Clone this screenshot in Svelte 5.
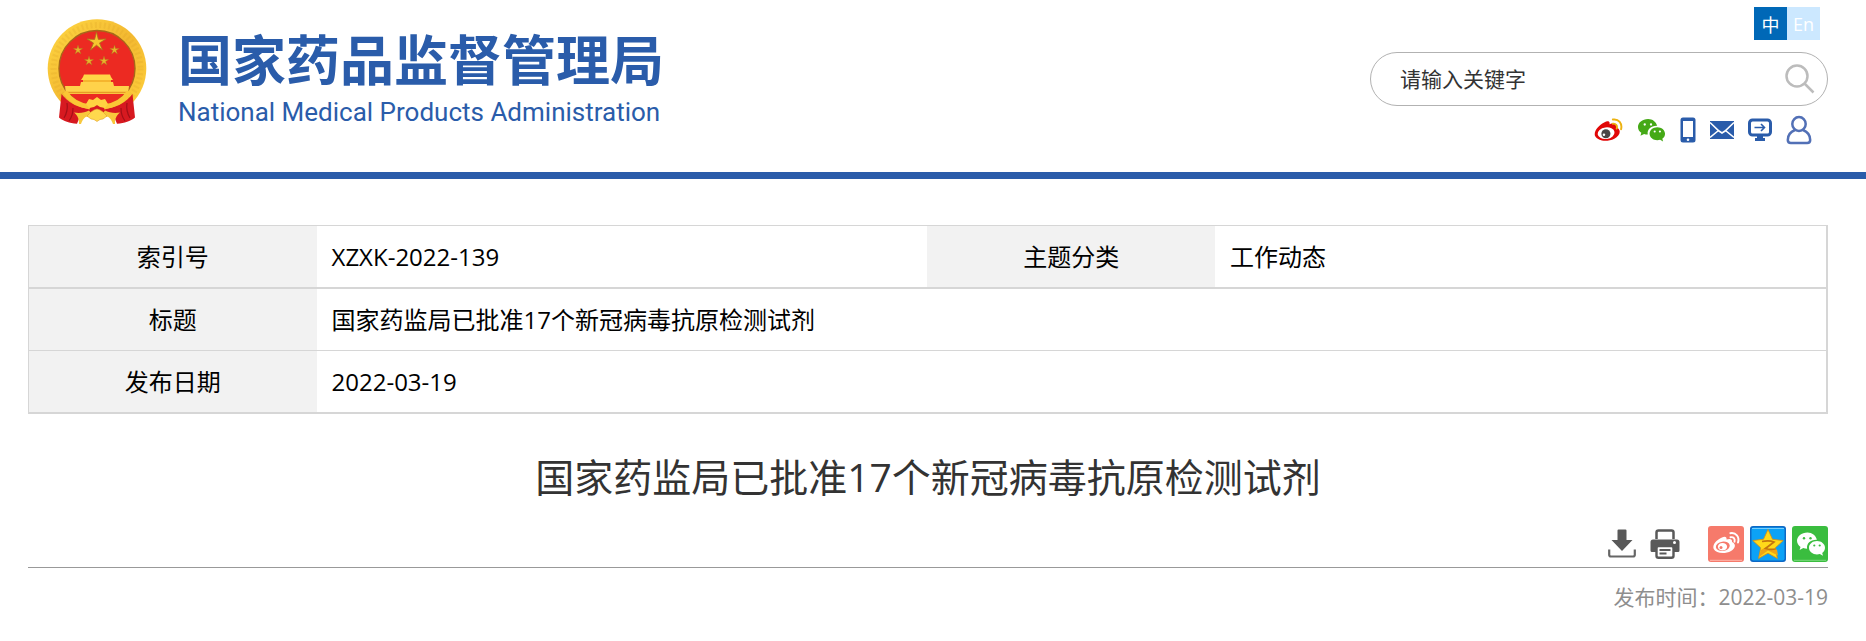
<script>
  let keyword = $state('');
  let lang = $state('zh');

  const title = '国家药监局已批准17个新冠病毒抗原检测试剂';
  const published = '2022-03-19';

  /** Points of a five-pointed star */
  function star(cx, cy, r, inner = 0.4) {
    const pts = [];
    for (let i = 0; i < 10; i++) {
      const rad = i % 2 ? r * inner : r;
      const a = (Math.PI / 5) * i - Math.PI / 2;
      pts.push(`${(cx + rad * Math.cos(a)).toFixed(2)},${(cy + rad * Math.sin(a)).toFixed(2)}`);
    }
    return pts.join(' ');
  }

  const smallStars = [[31, 31], [67.5, 31], [42, 42], [57, 42]];
</script>

{#snippet wechatShape(eyes)}
  <path d="M11.5 1C5.4 1 1 4.900 1 9.300c0 2.600 1.500 4.700 3.500 6.100L3.600 18.500l3.700-1.900c1.100.3 2.400.6 3.800.6-.9-5.500 3.700-9.300 9.800-9C19.800 3.900 16.100 1 11.500 1z" />
  <path d="M29 16.300c0-3.800-3.700-6.700-8-6.700s-8 2.900-8 6.700 3.700 6.700 8 6.700c1 0 2-.2 2.900-.4l3.100 1.700-.8-2.700c1.700-1.300 2.800-3.100 2.800-5.300z" />
  <g fill={eyes}>
    <circle cx="8" cy="6.800" r="1.200" />
    <circle cx="14.500" cy="6.800" r="1.200" />
    <circle cx="18.300" cy="14" r="1.100" />
    <circle cx="23.700" cy="14" r="1.100" />
  </g>
{/snippet}

<header class="site-header">
  <a class="brand" href="/" aria-label="国家药品监督管理局">
    <svg class="emblem" viewBox="0 0 100 105" aria-hidden="true">
      <defs>
        <linearGradient id="gold" x1="0" y1="0" x2="1" y2="1">
          <stop offset="0" stop-color="#ffd843" />
          <stop offset="0.5" stop-color="#f3b931" />
          <stop offset="1" stop-color="#ffd23c" />
        </linearGradient>
      </defs>
      <circle cx="50" cy="49.500" r="49.300" fill="url(#gold)" />
      <circle cx="50" cy="49.500" r="43.500" fill="none" stroke="#d99a22" stroke-width="6" stroke-dasharray="2 2.500" opacity="0.2" />
      <circle cx="50" cy="49.500" r="38" fill="#ec2a22" stroke="#a7661a" stroke-width="1.400" />
      <polygon points={star(49.5, 23, 10, 0.32)} fill="#f6c52f" stroke="#a9741b" stroke-width="0.800" />
      {#each smallStars as [x, y]}
        <polygon points={star(x, y, 5, 0.34)} fill="#e9b32c" stroke="#a9741b" stroke-width="0.400" />
      {/each}
      <!-- gate tower -->
      <path d="M37 55.500h26l1 2.500 2 3H34l2-3z" fill="#ffd646" />
      <path d="M36 61h28v3H36z" fill="#f5b52e" />
      <path d="M34 63h32l1 4h15l-1 8H19l-1-8h15z" fill="#ffd24a" />
      <path d="M19 73.500h62" stroke="#e79a25" stroke-width="1.500" />
      <!-- ribbon drapes -->
      <path d="M14.500 75c6 8 14 12.500 25 14.500l10.500-3 10.500 3c11-2 19-6.500 25-14.500l2.500 23.500c-5 4-10 5.500-18 6.200L66 95l-16-3-16 3-4 9.700c-8-.7-13-2.200-18-6.200z" fill="#d71920" />
      <path d="M18 73c5 8 12 13 25 15M82 73c-5 8-12 13-25 15" fill="none" stroke="#fbc735" stroke-width="5" />
      <path d="M20 84c1 6 0 10-3 15M26 89c0 5-1 9-4 13M80 84c-1 6 0 10 3 15M74 89c0 5 1 9 4 13" fill="none" stroke="#a30f17" stroke-width="1.200" />
      <path d="M39 85l3-5 4 1 4-3 4 3 4-1 3 5-3 4-5-1-3-2-3 2-5 1z" fill="#ffd241" />
      <path d="M27 93.500c6 1 11 0 15-2l3 4c-6 1-9 4-11 9.500h-2c0-5-1-8-5-11.500zM73 93.500c-6 1-11 0-15-2l-3 4c6 1 9 4 11 9.500h2c0-5 1-8 5-11.500z" fill="#f8c83c" />
      <path d="M40 97l4-4 3-2 3-1 3 1 3 2 4 4-4 3-3 .500-3 2-3-2-3-.500z" fill="#ffd84d" stroke="#e0a028" stroke-width="0.600" />
    </svg>
    <span class="brand-names">
      <span class="brand-zh">国家药品监督管理局</span>
      <span class="brand-en" lang="en">National Medical Products Administration</span>
    </span>
  </a>

  <div class="header-side">
    <div class="lang-switch">
      <button class:active={lang === 'zh'} onclick={() => (lang = 'zh')}>中</button>
      <button class:active={lang === 'en'} onclick={() => (lang = 'en')}>En</button>
    </div>

    <form class="search" onsubmit={(e) => e.preventDefault()}>
      <input type="text" bind:value={keyword} placeholder="请输入关键字" aria-label="请输入关键字" />
      <button type="submit" aria-label="搜索">
        <svg width="30" height="30" viewBox="0 0 30 30" fill="none" stroke="#bcbcbc" stroke-width="2.500">
          <circle cx="12" cy="12" r="10.500" />
          <path d="M19.500 19.500l9 9" />
        </svg>
      </button>
    </form>

    <nav class="quick-links">
      <a href="#weibo" aria-label="微博">
        <svg width="29" height="26" viewBox="0 0 30 26">
          <path d="M11 5c3-2 6-1 5 2 4-2 8-1 7 3 6 3 4 9-2 12-7 3.500-17 3-20-3C-.5 14 5 8 11 5z" fill="#e10707" />
          <ellipse cx="12.500" cy="16.300" rx="8.800" ry="6" fill="#fff" transform="rotate(-8 12.500 16.300)" />
          <circle cx="12.300" cy="16.800" r="4.700" fill="#4a4646" />
          <circle cx="10.300" cy="18" r="1.300" fill="#fff" />
          <path d="M19.500 6.500c3-.5 5 2 4 5M19.500 2.200c6-1 10 4 8.500 10" fill="none" stroke="#ecb211" stroke-width="2" stroke-linecap="round" />
        </svg>
      </a>
      <a href="#wechat" aria-label="微信">
        <svg width="29" height="26" viewBox="0 0 30 25" fill="#45a916">{@render wechatShape('#fff')}</svg>
      </a>
      <a href="#mobile" aria-label="手机版">
        <svg width="16" height="26" viewBox="0 0 16 26">
          <rect x="0.500" y="0.500" width="15" height="25" rx="2.500" fill="#2a5caa" />
          <path d="M3 4h10v16H3z" fill="#fff" />
          <circle cx="8" cy="22.700" r="1.300" fill="#fff" />
        </svg>
      </a>
      <a href="#mail" aria-label="邮箱">
        <svg width="24" height="18" viewBox="0 0 24 18">
          <path d="M0 0h24v18H0z" fill="#2a5caa" />
          <path d="M0 1.500l9 8.500 3 2 3-2 9-8.500M0 16.500L8.500 9.500M24 16.500L15.500 9.500" fill="none" stroke="#fff" stroke-width="1.600" />
        </svg>
      </a>
      <a href="#service" aria-label="网上办事">
        <svg width="24" height="24" viewBox="0 0 24 24">
          <rect x="1.500" y="2" width="21" height="15" rx="3" fill="none" stroke="#2a5caa" stroke-width="3" />
          <path d="M9 17h6v3h2v3H7v-3h2z" fill="#2a5caa" />
          <path d="M6.500 9.500h10M13 6l3.500 3.500L13 13" fill="none" stroke="#2a5caa" stroke-width="1.600" />
        </svg>
      </a>
      <a href="#login" aria-label="个人中心">
        <svg width="26" height="30" viewBox="0 0 26 30" fill="none" stroke="#5270b6" stroke-width="2.500">
          <ellipse cx="13" cy="9" rx="6.700" ry="7" />
          <path d="M9 15C4 17 1.800 20.500 1.800 25c0 2 1 3 3 3h16.400c2 0 3-1 3-3 0-4.500-2.200-8-7.200-10" />
        </svg>
      </a>
    </nav>
  </div>
</header>

<main class="content">
  <table class="info">
    <colgroup>
      <col class="col-label" /><col class="col-value" /><col class="col-label" /><col />
    </colgroup>
    <tbody>
      <tr>
        <th scope="row">索引号</th>
        <td>XZXK-2022-139</td>
        <th scope="row">主题分类</th>
        <td>工作动态</td>
      </tr>
      <tr>
        <th scope="row">标题</th>
        <td colspan="3">{title}</td>
      </tr>
      <tr>
        <th scope="row">发布日期</th>
        <td colspan="3">{published}</td>
      </tr>
    </tbody>
  </table>

  <h1>{title}</h1>

  <div class="tools">
    <button aria-label="下载">
      <svg width="28" height="30" viewBox="0 0 28 30">
        <path d="M9.500 1.500q0-1 1-1h7q1 0 1 1V11h6L14 22 3.500 11h6z" fill="#595959" />
        <path d="M1.200 20.500v5.300q0 1.700 1.700 1.700h22.200q1.700 0 1.700-1.700v-5.300" fill="none" stroke="#666" stroke-width="2.200" />
      </svg>
    </button>
    <button aria-label="打印" onclick={() => window.print()}>
      <svg width="30" height="30" viewBox="0 0 30 30">
        <path d="M6.500 10V3.500Q6.500 1.500 8.500 1.500h13q2 0 2 2V10" fill="none" stroke="#595959" stroke-width="2.500" />
        <path d="M3 10.500h24q2.500 0 2.500 2.500v8.500q0 1.500-1.500 1.500h-4v-5H6v5H2Q.5 23 .5 21.500V13Q.5 10.500 3 10.500z" fill="#595959" />
        <circle cx="24.500" cy="13.500" r="1.500" fill="#fff" />
        <rect x="6.500" y="17" width="17" height="11.700" rx="2" fill="#fff" stroke="#595959" stroke-width="2.400" />
        <path d="M9.500 21h11M9.500 24.500h7" stroke="#595959" stroke-width="1.900" />
      </svg>
    </button>
    <div class="share">
      <a href="#share-weibo" aria-label="分享到微博">
        <svg width="36" height="36" viewBox="0 0 36 36">
          <rect width="36" height="36" rx="3" fill="#f67a6b" />
          <path d="M2 34.300h32" stroke="#ffb9af" />
          <path d="M14 11.500c3-1.500 5-.5 4.500 2 3.500-1.200 6-.5 5.500 2.500 4.500 2 3.500 6.500-1 9-6 3.300-15 2.500-17.300-2C4 18.500 8.500 14 14 11.500z" fill="#fff" />
          <ellipse cx="14.800" cy="20.300" rx="7" ry="4.700" fill="#f67a6b" transform="rotate(-8 14.800 20.300)" />
          <ellipse cx="14.500" cy="20.700" rx="4.600" ry="3.800" fill="#fff" />
          <circle cx="13" cy="21.500" r="1.500" fill="#f67a6b" />
          <path d="M22.500 11.200c3-.6 4.800 1.600 4 4.500M22.300 7.200c5.500-1 9.500 3.500 7.700 9.300" fill="none" stroke="#fff" stroke-width="1.900" stroke-linecap="round" />
        </svg>
      </a>
      <a href="#share-qzone" aria-label="分享到QQ空间">
        <svg width="36" height="36" viewBox="0 0 36 36">
          <rect width="36" height="36" rx="3" fill="#0d68c5" />
          <rect x="1.500" y="1.500" width="33" height="33" rx="2" fill="#0ca2f6" />
          <path d="M2 2.500h32" stroke="#75ceff" />
          <polygon points={star(18, 19.5, 16, 0.48)} fill="#ffd91a" stroke="#d98b12" stroke-width="0.800" stroke-linejoin="round" />
          <path d="M25 16l-9 7q6 1.500 11 .5l1 6-10-5-9.500 7 2.500-7.500z" fill="#f0a514" />
          <path d="M12 15.500q7-1.500 12 .5l-8.500 6.500q5 1.500 10 .5" fill="none" stroke="#c4760f" stroke-width="1.700" />
        </svg>
      </a>
      <a href="#share-wechat" aria-label="分享到微信">
        <svg width="36" height="36" viewBox="0 0 36 36">
          <rect width="36" height="36" rx="3" fill="#3abd3f" />
          <path d="M2 34.300h32" stroke="#7cd97f" />
          <svg x="4" y="5" width="30" height="26" viewBox="0 0 30 25" fill="#fff">{@render wechatShape('#3abd3f')}</svg>
        </svg>
      </a>
    </div>
  </div>

  <p class="pub-time">发布时间：<time datetime={published}>{published}</time></p>
</main>

<style>
  :global(body) {
    margin: 0;
    background: #fff;
    color: #000;
    font-family: 'Open Sans', 'Noto Sans CJK SC', sans-serif;
  }

  button {
    padding: 0;
    border: none;
    background: none;
    font-family: inherit;
    cursor: pointer;
  }

  svg {
    display: block;
  }

  /* ── Header ── */
  .site-header {
    display: flex;
    justify-content: space-between;
    align-items: flex-start;
    padding: 7px 38px 27px 47px;
    border-bottom: 7px solid #2a5caa;
  }

  .brand {
    display: flex;
    gap: 31px;
    padding-top: 12px;
    color: #2a5caa;
    text-decoration: none;
  }

  .emblem {
    width: 100px;
    height: 105px;
  }

  .brand-names {
    display: flex;
    flex-direction: column;
    gap: 10px;
    padding-top: 12px;
    white-space: nowrap;
  }

  .brand-zh {
    font-family: 'Noto Sans CJK SC', sans-serif;
    font-size: 54px;
    font-weight: 700;
    line-height: 54px;
  }

  .brand-en {
    font-family: Roboto, sans-serif;
    font-size: 26px;
    line-height: 34px;
  }

  .header-side {
    display: flex;
    flex-direction: column;
    align-items: flex-end;
  }

  .lang-switch {
    display: flex;
    margin-right: 8px;
  }

  .lang-switch button {
    width: 33px;
    height: 33px;
    font-size: 18px;
    color: #fff;
    background: #cce8ff;
  }

  .lang-switch button.active {
    background: #0068b7;
  }

  .search {
    display: flex;
    align-items: center;
    box-sizing: border-box;
    width: 458px;
    height: 54px;
    margin-top: 12px;
    padding: 0 12px 0 29px;
    border: 1px solid #b2b2b2;
    border-radius: 27px;
  }

  .search input {
    flex: 1;
    min-width: 0;
    padding: 0;
    border: none;
    outline: none;
    background: none;
    font-family: inherit;
    font-size: 21px;
    color: #333;
  }

  .search input::placeholder {
    color: #333;
    opacity: 1;
  }

  .quick-links {
    display: flex;
    align-items: center;
    gap: 14px;
    margin: 9px 16px 0 0;
  }

  /* ── Document info ── */
  .content {
    padding: 46px 38px 20px 28px;
  }

  .info {
    width: 100%;
    table-layout: fixed;
    border: 1px solid #d6d6d6;
    border-width: 1px 2px 1px 1px;
    border-spacing: 0;
    font-size: 24px;
    line-height: 36px;
  }

  .col-label { width: 16%; }
  .col-value { width: 34%; }

  .info th,
  .info td {
    height: 61px;
    padding: 0 15px;
    border-bottom: 1px solid #d6d6d6;
  }

  .info tr:first-child > * { border-bottom-width: 2px; }

  .info th {
    font-weight: 400;
    text-align: center;
    background: #f2f2f2;
  }

  .info td {
    text-align: left;
  }

  h1 {
    margin: 35px 0 21px;
    font-size: 39px;
    font-weight: 400;
    line-height: 56px;
    text-align: center;
    color: #333;
  }

  /* ── Tool bar ── */
  .tools {
    display: flex;
    justify-content: flex-end;
    align-items: center;
    gap: 14px;
    padding-bottom: 5px;
    border-bottom: 1px solid #999;
  }

  .share {
    display: flex;
    gap: 6px;
    margin-left: 14px;
  }

  .pub-time {
    margin: 13px 0 0;
    font-size: 21px;
    line-height: 32px;
    text-align: right;
    color: #8e8e8e;
  }
</style>
